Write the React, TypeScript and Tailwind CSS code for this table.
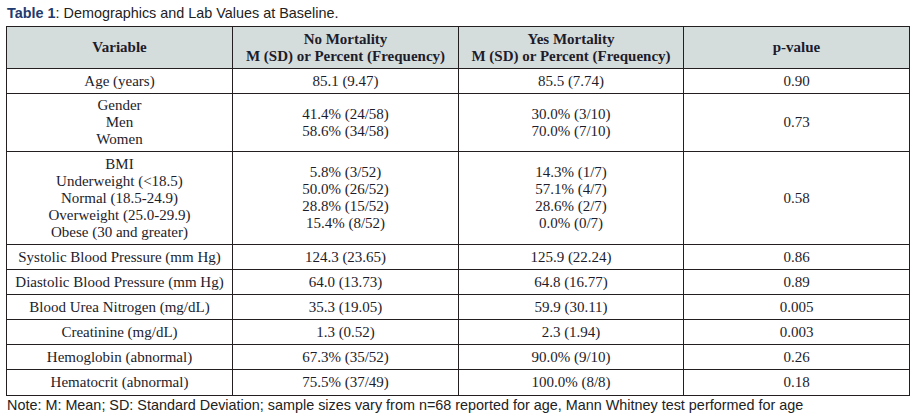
const rows: { label: string[]; no: string[]; yes: string[]; p: string; h: string }[] = [
  { label: ["Age (years)"], no: ["85.1 (9.47)"], yes: ["85.5 (7.74)"], p: "0.90", h: "h-[25px]" },
  {
    label: ["Gender", "Men", "Women"],
    no: ["41.4% (24/58)", "58.6% (34/58)"],
    yes: ["30.0% (3/10)", "70.0% (7/10)"],
    p: "0.73",
    h: "h-[58px]",
  },
  {
    label: ["BMI", "Underweight (<18.5)", "Normal (18.5-24.9)", "Overweight (25.0-29.9)", "Obese (30 and greater)"],
    no: ["5.8% (3/52)", "50.0% (26/52)", "28.8% (15/52)", "15.4% (8/52)"],
    yes: ["14.3% (1/7)", "57.1% (4/7)", "28.6% (2/7)", "0.0% (0/7)"],
    p: "0.58",
    h: "h-[93px]",
  },
  { label: ["Systolic Blood Pressure (mm Hg)"], no: ["124.3 (23.65)"], yes: ["125.9 (22.24)"], p: "0.86", h: "h-[25px]" },
  { label: ["Diastolic Blood Pressure (mm Hg)"], no: ["64.0 (13.73)"], yes: ["64.8 (16.77)"], p: "0.89", h: "h-[25px]" },
  { label: ["Blood Urea Nitrogen (mg/dL)"], no: ["35.3 (19.05)"], yes: ["59.9 (30.11)"], p: "0.005", h: "h-[25px]" },
  { label: ["Creatinine (mg/dL)"], no: ["1.3 (0.52)"], yes: ["2.3 (1.94)"], p: "0.003", h: "h-[25px]" },
  { label: ["Hemoglobin (abnormal)"], no: ["67.3% (35/52)"], yes: ["90.0% (9/10)"], p: "0.26", h: "h-[25px]" },
  { label: ["Hematocrit (abnormal)"], no: ["75.5% (37/49)"], yes: ["100.0% (8/8)"], p: "0.18", h: "h-[26px]" },
];

const Lines = ({ items }: { items: string[] }) => (
  <>
    {items.map((t, i) => (
      <div key={i}>{t}</div>
    ))}
  </>
);

export default function App() {
  return (
    <div className="w-[915px] h-[417px] bg-white px-[6px] pt-[5px] font-['Liberation_Sans',Arial,sans-serif]">
      <p className="text-[14.4px] leading-[17px] text-[#222] pl-[1px] h-[21px]">
        <span className="font-bold text-[#1f3b6f]">Table 1</span>: Demographics and Lab Values at Baseline.
      </p>
      <table className="w-[904px] table-fixed border-collapse font-['Liberation_Serif',Georgia,serif] text-[15px] leading-[17px] text-[#1d1c2b] text-center">
        <thead>
          <tr className="h-[42px] bg-[#d5dcdc] font-bold">
            <th className="border border-[#231f20] w-[226px]">Variable</th>
            <th className="border border-[#231f20] w-[226px]">
              No Mortality
              <br />
              M (SD) or Percent (Frequency)
            </th>
            <th className="border border-[#231f20] w-[225px]">
              Yes Mortality
              <br />
              M (SD) or Percent (Frequency)
            </th>
            <th className="border border-[#231f20]">p-value</th>
          </tr>
        </thead>
        <tbody>
          {rows.map((r) => (
            <tr key={r.label[0]} className={r.h}>
              <td className="border border-[#231f20] p-0">
                <Lines items={r.label} />
              </td>
              <td className="border border-[#231f20] p-0">
                <Lines items={r.no} />
              </td>
              <td className="border border-[#231f20] p-0">
                <Lines items={r.yes} />
              </td>
              <td className="border border-[#231f20] p-0">{r.p}</td>
            </tr>
          ))}
        </tbody>
      </table>
      <p className="text-[14.4px] leading-[18px] text-[#222] pl-[1px] whitespace-nowrap">
        Note: M: Mean; SD: Standard Deviation; sample sizes vary from n=68 reported for age, Mann Whitney test performed for age
      </p>
    </div>
  );
}
